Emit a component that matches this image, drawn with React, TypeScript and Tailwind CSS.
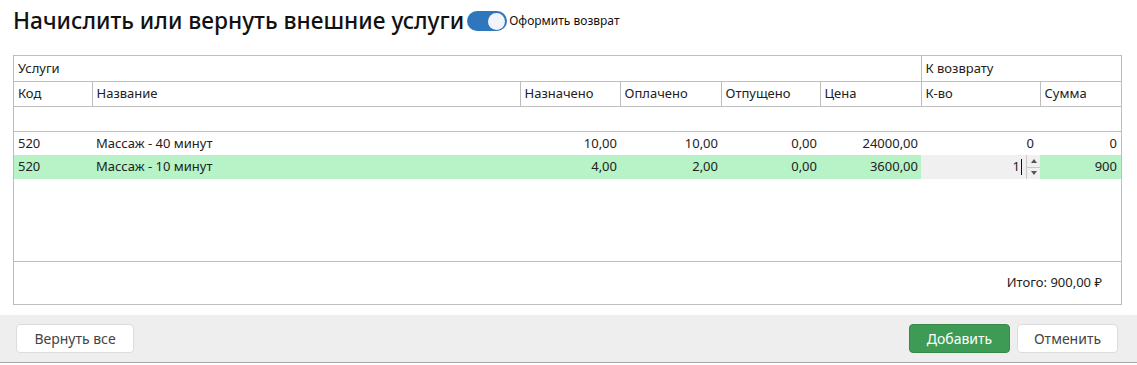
const rows = [
  { code: "520", name: "Массаж - 40 минут", a: "10,00", b: "10,00", c: "0,00", price: "24000,00", qty: "0", sum: "0", active: false },
  { code: "520", name: "Массаж - 10 минут", a: "4,00", b: "2,00", c: "0,00", price: "3600,00", qty: "1", sum: "900", active: true },
];

const th = "h-[25px] border border-[#bdbdbd] px-[4px] text-left font-normal text-[13px] text-[#222]";
const cell = "h-[24px] text-[13px] text-[#222]";
const num = cell + " px-[3px] text-right";
const txt = cell + " pl-[4px] text-left";

export default function App() {
  return (
    <div className="w-[1137px] h-[365px] bg-white font-['Noto_Sans',sans-serif] text-[#222] overflow-hidden">
      {/* Заголовок */}
      <div className="flex items-center h-[40px] pl-[13px] pt-[2px]">
        <h1 className="text-[22.7px] leading-[28px] text-[#111] font-medium">Начислить или вернуть внешние услуги</h1>
        <div className="ml-[3px] w-[40px] h-[20px] rounded-full bg-[#2f77bd] flex items-center justify-end pr-[2px]">
          <div className="w-[17px] h-[17px] rounded-full bg-[#f1f5fb]" />
        </div>
        <span className="ml-[2px] text-[12px] text-[#111]">Оформить возврат</span>
      </div>

      <div className="mx-[13px] mt-[15px] w-[1109px] border border-[#bdbdbd]">
        <table className="w-full table-fixed border-collapse">
          <colgroup>
            <col className="w-[78px]" />
            <col className="w-[428px]" />
            <col className="w-[100px]" />
            <col className="w-[101px]" />
            <col className="w-[99px]" />
            <col className="w-[101px]" />
            <col className="w-[119px]" />
            <col />
          </colgroup>
          <thead>
            <tr>
              <th colSpan={6} className={th + " border-t-0 border-l-0"}>Услуги</th>
              <th colSpan={2} className={th + " border-t-0 border-r-0"}>К возврату</th>
            </tr>
            <tr>
              <th className={th + " border-l-0"}>Код</th>
              <th className={th}>Название</th>
              <th className={th}>Назначено</th>
              <th className={th}>Оплачено</th>
              <th className={th}>Отпущено</th>
              <th className={th}>Цена</th>
              <th className={th}>К-во</th>
              <th className={th + " border-r-0"}>Сумма</th>
            </tr>
            <tr>
              <th colSpan={8} className="h-[25px] border-b border-[#bdbdbd]" />
            </tr>
          </thead>
          <tbody>
            {rows.map((r, i) => (
              <tr key={i} className={r.active ? "bg-[#b7f3c7]" : ""}>
                <td className={txt}>{r.code}</td>
                <td className={txt}>{r.name}</td>
                <td className={num}>{r.a}</td>
                <td className={num}>{r.b}</td>
                <td className={num}>{r.c}</td>
                <td className={num}>{r.price}</td>
                {r.active ? (
                  <td className="h-[24px] p-0 bg-[#f0f0f0]">
                    <div className="flex items-stretch h-[24px]">
                      <div className="flex-1 flex items-center justify-end text-[13px]">
                        <span>{r.qty}</span>
                        <span className="ml-[1px] w-[1px] h-[16px] bg-[#111]" />
                      </div>
                      <div className="ml-[4px] w-[14px] flex flex-col border-l border-[#c8c8c8]">
                        <div className="flex-1 flex items-center justify-center border-b border-[#c8c8c8]">
                          <svg width="6" height="4" viewBox="0 0 6 4"><path d="M0 4 L3 0 L6 4 Z" fill="#555" /></svg>
                        </div>
                        <div className="flex-1 flex items-center justify-center">
                          <svg width="6" height="4" viewBox="0 0 6 4"><path d="M0 0 L3 4 L6 0 Z" fill="#555" /></svg>
                        </div>
                      </div>
                    </div>
                  </td>
                ) : (
                  <td className={cell + " text-right pr-[6px]"}>{r.qty}</td>
                )}
                <td className={cell + " text-right pr-[4px]"}>{r.sum}</td>
              </tr>
            ))}
          </tbody>
        </table>
        <div className="h-[82px]" />
        <div className="h-[43px] border-t border-[#bdbdbd] flex items-center justify-end pr-[19px] text-[13px] text-[#222]">
          Итого: 900,00 ₽
        </div>
      </div>

      {/* Нижняя панель */}
      <div className="mt-[10px] h-[48px] bg-[#eeeeee] border-b border-[#a9a9a9] flex items-center px-[16px]">
        <button className="w-[118px] h-[29px] rounded-[4px] border border-[#dcdcdc] bg-white text-[14px] text-[#444]">Вернуть все</button>
        <div className="ml-auto flex gap-[7px] pr-[3px]">
          <button className="w-[101px] h-[29px] rounded-[4px] bg-[#3e9b55] border border-[#37894b] text-[14px] text-white">Добавить</button>
          <button className="w-[101px] h-[29px] rounded-[4px] border border-[#dcdcdc] bg-white text-[14px] text-[#444]">Отменить</button>
        </div>
      </div>
    </div>
  );
}
